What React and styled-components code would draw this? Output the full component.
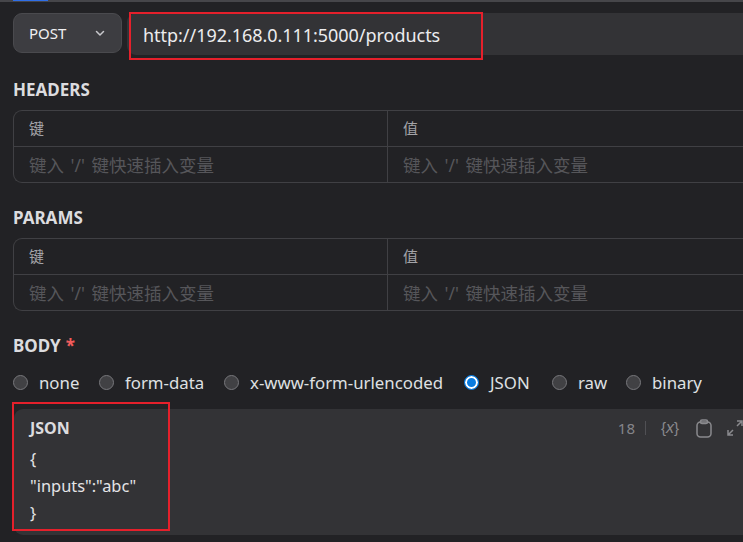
import React from "react";
import styled, { createGlobalStyle } from "styled-components";

const GlobalStyle = createGlobalStyle`
  html, body {
    margin: 0;
    padding: 0;
    background: #222225;
    overflow: hidden;
  }
  * { box-sizing: border-box; }
`;

const Page = styled.div`
  position: relative;
  width: 743px;
  height: 542px;
  overflow: hidden;
  background: #222225;
  color: #e4e4e6;
  font-family: "Noto Sans", "Noto Sans CJK SC", sans-serif;
`;
const TabLine = styled.div`
  height: 2px;
  background: #46464a;
  padding-left: 13px;
`;
const ActiveTab = styled.div`
  width: 35px;
  height: 1px;
  background: #2f6fe8;
`;
const Content = styled.div`
  padding: 11px 0 0 13px;
`;
const RequestBar = styled.div`
  display: flex;
  gap: 5px;
  height: 42px;
`;
const MethodSelect = styled.div`
  width: 109px;
  height: 40px;
  flex: none;
  display: flex;
  align-items: center;
  justify-content: space-between;
  padding: 0 15px 0 15px;
  background: #3d3d41;
  border: 1px solid #4a4a4e;
  border-radius: 9px;
  font-size: 15px;
  color: #f0f0f2;
`;
const UrlInput = styled.div`
  flex: 1;
  display: flex;
  align-items: center;
  padding: 2px 0 0 16px;
  background: #333336;
  border-radius: 9px 0 0 9px;
  font-size: 18px;
  letter-spacing: -0.04px;
  color: #ececee;
`;
const SectionTitle = styled.div`
  height: 22px;
  margin-top: ${(p) => p.$top}px;
  line-height: 22px;
  font-size: 17px;
  font-weight: 700;
  color: #dcdcdf;
`;
const KvTable = styled.div`
  margin-top: 9px;
  height: 73px;
  border: 1px solid #404044;
  border-right: none;
  border-radius: 9px 0 0 9px;
`;
const KvRow = styled.div`
  display: grid;
  grid-template-columns: 373px 1fr;
  height: ${(p) => p.$height}px;
  border-bottom: ${(p) => (p.$last ? "none" : "1px solid #404044")};
`;
const KvCell = styled.div`
  display: flex;
  align-items: center;
  padding: 0 0 ${(p) => (p.$placeholder ? 0 : 2)}px 15px;
  border-left: ${(p) => (p.$right ? "1px solid #404044" : "none")};
  font-size: ${(p) => (p.$placeholder ? 17.5 : 15)}px;
  word-spacing: ${(p) => (p.$placeholder ? 2 : 0)}px;
  color: ${(p) => (p.$placeholder ? "#56565a" : "#a4a4a8")};
  white-space: pre;
`;
const Star = styled.span`
  color: #f25c5c;
  margin-left: 5px;
`;
const RadioRow = styled.div`
  display: flex;
  align-items: center;
  height: 24px;
  margin-top: 13px;
`;
const RadioItem = styled.label`
  display: flex;
  align-items: center;
  flex: none;
  width: ${(p) => p.$width}px;
  gap: 11px;
  font-size: 16.8px;
  color: #dfe0e2;
`;
const RadioDot = styled.span`
  width: 15px;
  height: 15px;
  border-radius: 50%;
  flex: none;
  background: ${(p) => (p.$checked ? "#0a7ce0" : "#414144")};
  border: 1.5px solid ${(p) => (p.$checked ? "#0a7ce0" : "#77777b")};
  box-shadow: ${(p) => (p.$checked ? "inset 0 0 0 2px #ffffff" : "none")};
`;
const Editor = styled.div`
  margin-top: 15px;
  margin-left: 1px;
  height: 126px;
  background: #333336;
  border-radius: 9px 0 0 9px;
  padding: 7px 0 0 16px;
`;
const EditorHead = styled.div`
  display: flex;
  align-items: center;
  justify-content: space-between;
  height: 24px;
`;
const EditorTitle = styled.div`
  font-size: 16px;
  font-weight: 700;
  color: #dcdcdf;
`;
const EditorTools = styled.div`
  display: flex;
  align-items: center;
  color: #86868a;
`;
const Count = styled.span`
  font-size: 15px;
  margin-left: -1px;
  color: #85858a;
`;
const ToolDivider = styled.span`
  width: 1px;
  height: 14px;
  background: #505054;
  margin: 0 15px 0 10px;
`;
const VarIcon = styled.span`
  font-family: "Liberation Sans", sans-serif;
  font-size: 15px;
  width: 19px;
  white-space: nowrap;
  color: #8a8a8e;
  margin-right: 16px;
  & i {
    font-size: 16px;
  }
`;
const ToolIcon = styled.svg`
  flex: none;
  margin-right: ${(p) => p.$gap}px;
`;
const Code = styled.div`
  margin-top: 5px;
  font-size: 16.4px;
  line-height: 27px;
  color: #e4e4e6;
  white-space: pre;
`;
const RedBox = styled.div`
  position: absolute;
  border: 2px solid #e5202b;
  pointer-events: none;
  left: ${(p) => p.$left}px;
  top: ${(p) => p.$top}px;
  width: ${(p) => p.$width}px;
  height: ${(p) => p.$height}px;
`;

const Chevron = () => (
  <svg width="12" height="12" viewBox="0 0 12 12" fill="none" stroke="#c8c8cc" strokeWidth="1.5" strokeLinecap="round" strokeLinejoin="round">
    <path d="M2.5 4.5 6 8l3.5-3.5" />
  </svg>
);

const ClipboardIcon = () => (
  <ToolIcon $gap={15} width="16" height="19" viewBox="0 0 16 19" fill="none" stroke="#8a8a8e" strokeWidth="1.5">
    <rect x="1" y="3" width="14" height="15" rx="3.5" />
    <rect x="4.5" y="1" width="7" height="3.5" rx="1.5" />
  </ToolIcon>
);

const ExpandIcon = () => (
  <ToolIcon $gap={0} width="16" height="16" viewBox="0 0 16 16" fill="none" stroke="#8a8a8e" strokeWidth="1.5">
    <path d="M1 10v5h5M1 15l5-5M10 1h5v5M15 1l-5 5" />
  </ToolIcon>
);

const Table = () => (
  <KvTable>
    <KvRow $height={36}>
      <KvCell>键</KvCell>
      <KvCell $right>值</KvCell>
    </KvRow>
    <KvRow $height={35} $last>
      <KvCell $placeholder>键入 '/' 键快速插入变量</KvCell>
      <KvCell $placeholder $right>键入 '/' 键快速插入变量</KvCell>
    </KvRow>
  </KvTable>
);

const bodyTypes = [
  { name: "none", width: 86 },
  { name: "form-data", width: 125 },
  { name: "x-www-form-urlencoded", width: 240 },
  { name: "JSON", width: 88 },
  { name: "raw", width: 74 },
  { name: "binary", width: 80 },
];

export default function App() {
  return (
    <Page>
      <GlobalStyle />
      <TabLine>
        <ActiveTab />
      </TabLine>
      <Content>
        <RequestBar>
          <MethodSelect>
            POST
            <Chevron />
          </MethodSelect>
          <UrlInput>http://192.168.0.111:5000/products</UrlInput>
        </RequestBar>
        <SectionTitle $top={24}>HEADERS</SectionTitle>
        <Table />
        <SectionTitle $top={24}>PARAMS</SectionTitle>
        <Table />
        <SectionTitle $top={24}>
          BODY<Star>*</Star>
        </SectionTitle>
        <RadioRow>
          {bodyTypes.map((t) => (
            <RadioItem key={t.name} $width={t.width}>
              <RadioDot $checked={t.name === "JSON"} />
              {t.name}
            </RadioItem>
          ))}
        </RadioRow>
        <Editor>
          <EditorHead>
            <EditorTitle>JSON</EditorTitle>
            <EditorTools>
              <Count>18</Count>
              <ToolDivider />
              <VarIcon>
                {"{"}
                <i>x</i>
                {"}"}
              </VarIcon>
              <ClipboardIcon />
              <ExpandIcon />
            </EditorTools>
          </EditorHead>
          <Code>{'{\n"inputs":"abc"\n}'}</Code>
        </Editor>
      </Content>
      <RedBox $left={129} $top={12} $width={354} $height={48} />
      <RedBox $left={12} $top={402} $width={158} $height={129} />
    </Page>
  );
}
